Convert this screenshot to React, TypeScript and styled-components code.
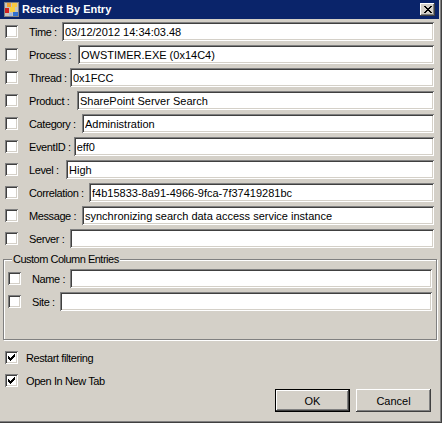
import styled, { createGlobalStyle } from "styled-components";

const Global = createGlobalStyle`
  body {
    margin: 0;
    background: #d4d0c8;
    font-family: "Liberation Sans", Arial, sans-serif;
    font-size: 11px;
    color: #000;
  }
`;

const Window = styled.div`
  width: 442px;
  height: 423px;
  box-sizing: border-box;
  background: #d4d0c8;
  border-right: 1px solid #404040;
  border-bottom: 1px solid #404040;
  box-shadow: inset -1px -1px 0 #808080;
  padding: 0 2px 0 0;
  display: flex;
  flex-direction: column;
`;

const TitleBar = styled.div`
  height: 19px;
  background: #0a246a;
  display: flex;
  align-items: center;
  padding: 0 4px 0 4px;
  color: #fff;
  font-weight: bold;
  font-size: 11px;
  gap: 3px;
`;

const Title = styled.span`
  flex: 1;
  line-height: 19px;
`;

const CloseButton = styled.div`
  width: 15px;
  height: 13px;
  box-sizing: border-box;
  background: #d4d0c8;
  box-shadow: inset -1px -1px 0 #404040, inset 1px 1px 0 #fff,
    inset -2px -2px 0 #808080;
  display: flex;
  align-items: center;
  justify-content: center;
`;

const Body = styled.div`
  padding: 3px 5px 0 5px;
  display: flex;
  flex-direction: column;
`;

const Row = styled.div`
  display: flex;
  align-items: center;
  height: 19px;
  margin-bottom: 4px;
`;

const Box = styled.span`
  width: 13px;
  height: 13px;
  flex: none;
  box-sizing: border-box;
  background: #fff;
  box-shadow: inset 1px 1px 0 #808080, inset -1px -1px 0 #fff,
    inset 2px 2px 0 #404040, inset -2px -2px 0 #d4d0c8;
  display: flex;
  align-items: center;
  justify-content: center;
`;

const FieldLabel = styled.span<{ $w: number }>`
  margin-left: 11px;
  min-width: ${(p) => p.$w}px;
  box-sizing: border-box;
  padding-right: 3px;
  flex: none;
  white-space: nowrap;
  letter-spacing: -0.4px;
`;

const Field = styled.input`
  flex: 1;
  min-width: 0;
  height: 19px;
  box-sizing: border-box;
  border: none;
  outline: none;
  background: #fff;
  font: inherit;
  color: #000;
  padding: 0 3px;
  box-shadow: inset 1px 1px 0 #808080, inset -1px -1px 0 #fff,
    inset 2px 2px 0 #404040, inset -2px -2px 0 #d4d0c8;
`;

const Group = styled.div`
  position: relative;
  margin: 7px -3px 0 -2px;
  height: 81px;
  box-sizing: border-box;
  border: 1px solid #808080;
  box-shadow: inset 1px 1px 0 #fff, 1px 1px 0 #fff;
  padding: 9px 4px 0 4px;
`;

const Legend = styled.span`
  position: absolute;
  top: -7px;
  left: 8px;
  line-height: 13px;
  padding: 0 1px;
  background: #d4d0c8;
  letter-spacing: -0.5px;
`;

const Option = styled.div`
  display: flex;
  align-items: center;
  height: 13px;
  margin-top: 11px;
  & + & {
    margin-top: 10px;
  }
`;

const OptionLabel = styled.span`
  margin-left: 8px;
  letter-spacing: -0.4px;
`;

const Buttons = styled.div`
  display: flex;
  justify-content: flex-end;
  gap: 6px;
  margin-top: 2px;
  padding-right: 3px;
`;

const Button = styled.div<{ $default?: boolean }>`
  width: 75px;
  height: 23px;
  box-sizing: border-box;
  background: #d4d0c8;
  display: flex;
  align-items: center;
  justify-content: center;
  border: ${(p) => (p.$default ? "1px solid #000" : "none")};
  box-shadow: inset -1px -1px 0 #404040, inset 1px 1px 0 #fff,
    inset -2px -2px 0 #808080;
`;

function Check({ checked }: { checked?: boolean }) {
  return (
    <Box>
      {checked && (
        <svg width="7" height="7" viewBox="0 0 7 7" shapeRendering="crispEdges">
          <path
            d="M0 2h1v3h-1zM1 3h1v3h-1zM2 4h1v3h-1zM3 3h1v3h-1zM4 2h1v3h-1zM5 1h1v3h-1zM6 0h1v3h-1z"
            fill="#000"
          />
        </svg>
      )}
    </Box>
  );
}

function AppIcon() {
  return (
    <svg width="15" height="15" viewBox="0 0 15 15" shapeRendering="crispEdges">
      <rect x="0" y="0" width="15" height="15" fill="#c8c4bc" />
      <rect x="0.5" y="0.5" width="14" height="14" fill="none" stroke="#808080" />
      <rect x="3" y="1" width="4" height="4" fill="#f0a030" />
      <rect x="8" y="1" width="5" height="4" fill="#f8c840" />
      <rect x="1" y="6" width="4" height="5" fill="#d02020" />
      <rect x="6" y="5" width="5" height="5" fill="#f8d040" />
      <rect x="9" y="10" width="5" height="4" fill="#3070d0" />
      <rect x="5" y="11" width="3" height="3" fill="#a0b8e0" />
    </svg>
  );
}

const fields = [
  { label: "Time :", w: 33, value: "03/12/2012 14:34:03.48" },
  { label: "Process :", w: 49, value: "OWSTIMER.EXE (0x14C4)" },
  { label: "Thread :", w: 41, value: "0x1FCC" },
  { label: "Product :", w: 48, value: "SharePoint Server Search" },
  { label: "Category :", w: 53, value: "Administration" },
  { label: "EventID :", w: 40, value: "eff0" },
  { label: "Level :", w: 37, value: "High" },
  { label: "Correlation :", w: 60, value: "f4b15833-8a91-4966-9fca-7f37419281bc" },
  { label: "Message :", w: 53, value: "synchronizing search data access service instance" },
  { label: "Server :", w: 41, value: "" },
];

const custom = [
  { label: "Name :", w: 38 },
  { label: "Site :", w: 28 },
];

export default function App() {
  return (
    <>
      <Global />
      <Window>
        <TitleBar>
          <AppIcon />
          <Title>Restrict By Entry</Title>
          <CloseButton>
            <svg width="8" height="7" viewBox="0 0 8 7" shapeRendering="crispEdges">
              <path
                d="M0 0h2v1h-2zM6 0h2v1h-2zM1 1h2v1h-2zM5 1h2v1h-2zM2 2h4v1h-4zM3 3h2v1h-2zM2 4h4v1h-4zM1 5h2v1h-2zM5 5h2v1h-2zM0 6h2v1h-2zM6 6h2v1h-2z"
                fill="#000"
              />
            </svg>
          </CloseButton>
        </TitleBar>
        <Body>
          {fields.map((f) => (
            <Row key={f.label}>
              <Check />
              <FieldLabel $w={f.w}>{f.label}</FieldLabel>
              <Field readOnly defaultValue={f.value} />
            </Row>
          ))}
          <Group>
            <Legend>Custom Column Entries</Legend>
            {custom.map((f) => (
              <Row key={f.label}>
                <Check />
                <FieldLabel $w={f.w}>{f.label}</FieldLabel>
                <Field readOnly defaultValue="" />
              </Row>
            ))}
          </Group>
          <Option>
            <Check checked />
            <OptionLabel>Restart filtering</OptionLabel>
          </Option>
          <Option>
            <Check checked />
            <OptionLabel>Open In New Tab</OptionLabel>
          </Option>
          <Buttons>
            <Button $default>OK</Button>
            <Button>Cancel</Button>
          </Buttons>
        </Body>
      </Window>
    </>
  );
}
